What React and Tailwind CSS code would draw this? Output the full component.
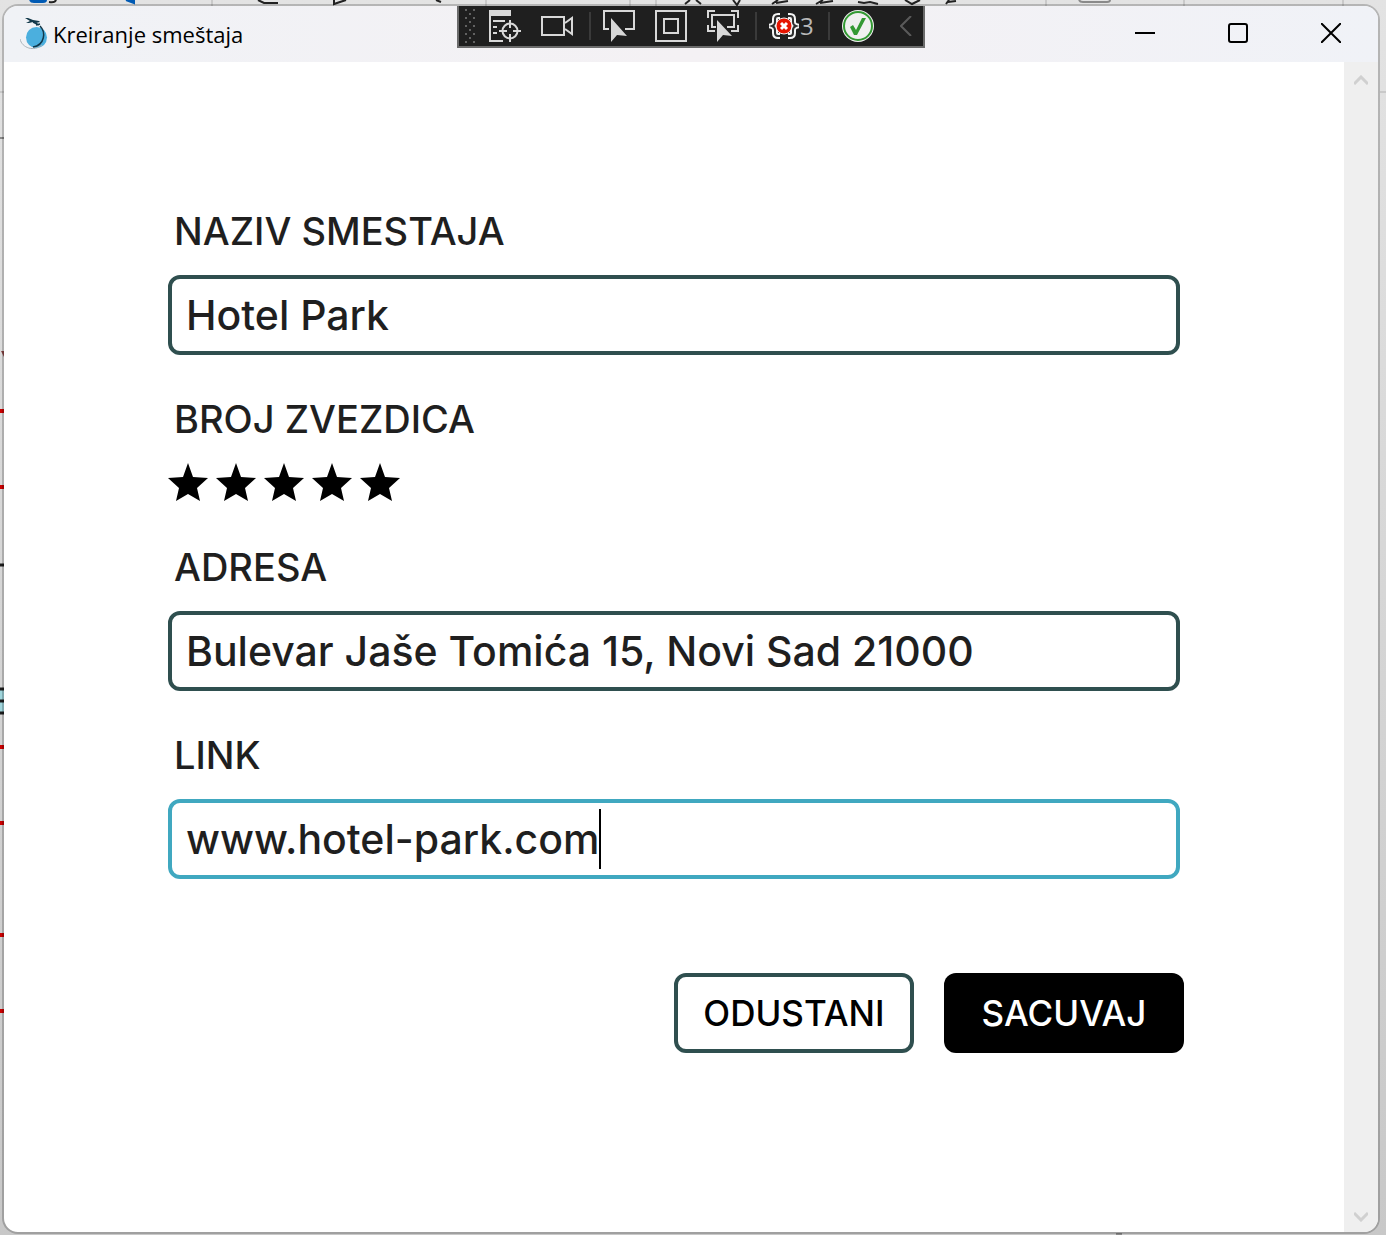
import React from "react";

const strip = "shrink-0 text-[#d8d8d8]";

function Divider() {
  return <span className="h-7 w-0.5 shrink-0 bg-[#3a3a3a]" />;
}

function AppLogo() {
  return (
    <svg className="h-8 w-8 shrink-0" viewBox="0 0 32 32" aria-hidden="true">
      <circle cx="16.500" cy="19.500" r="10.500" fill="#4bafde" />
      <path d="M0 21c2 9 14 13 22 6" fill="none" stroke="#aab2b8" strokeWidth="1" />
      <path d="M20 8c6 6 5 19-7 21" fill="none" stroke="#12384a" strokeWidth="1.500" />
      <path d="M5 0l3 0 5 2 6 1 1 1-4 1-3-1-4 1-3 0 4-2z" fill="#12384a" />
      <path d="M13 4l6 3M16 7l4-1" stroke="#12384a" strokeWidth="1.500" />
    </svg>
  );
}

function DebugToolbar() {
  return (
    <div
      role="toolbar"
      aria-label="Debug"
      className="absolute inset-x-0 -top-0.5 mx-auto flex h-11 w-[468px] items-center border-2 border-[#6b6b6b] bg-[#1f1f1f]"
    >
      <svg className="ml-1.5 h-9 w-3 shrink-0" viewBox="0 0 12 36" fill="#626262" aria-hidden="true">
        {[0, 8, 16, 24, 32].map((y) => (
          <path key={y} d={`M0 ${y + 1}h2v2h-2zM8 ${y + 1}h2v2h-2z`} />
        ))}
        {[5, 13, 21, 29].map((y) => (
          <path key={y} d={`M4 ${y}h2v2h-2z`} />
        ))}
      </svg>
      <button type="button" aria-label="Live visual tree" className={`ml-3 ${strip}`}>
        <svg className="h-8 w-8" viewBox="0 0 32 32" fill="none" stroke="currentColor" strokeWidth="2">
          <path d="M0 0h22v6H0z" fill="currentColor" stroke="none" />
          <path d="M1 5v26h13M4 11h12M4 17h4M4 23h4" />
          <circle cx="21" cy="21" r="7.500" />
          <path d="M21 10v8M21 24v8M10 21h8M24 21h8" />
        </svg>
      </button>
      <button type="button" aria-label="Record" className={`ml-5 ${strip}`}>
        <svg className="h-8 w-8" viewBox="0 0 32 32" fill="none" stroke="currentColor" strokeWidth="2">
          <path d="M1 7h22v18H1zM24 13l7-5v16l-7-5" />
        </svg>
      </button>
      <span className="w-4 shrink-0" />
      <Divider />
      <button type="button" aria-label="Select element" className={`ml-3 ${strip}`}>
        <svg className="h-8 w-8" viewBox="0 0 32 32" fill="none" stroke="currentColor" strokeWidth="2">
          <path d="M6 19H1V1h30v18h-9" />
          <path d="M8 8v24l6-7 10 1z" fill="currentColor" stroke="none" />
        </svg>
      </button>
      <button type="button" aria-label="Display layout adorners" className={`ml-5 ${strip}`}>
        <svg className="h-8 w-8" viewBox="0 0 32 32" fill="none" stroke="currentColor" strokeWidth="2">
          <path d="M1 1h30v30H1zM9 9h14v14H9z" />
        </svg>
      </button>
      <button type="button" aria-label="Track focused element" className={`ml-5 ${strip}`}>
        <svg className="h-8 w-8" viewBox="0 0 32 32" fill="none" stroke="currentColor" strokeWidth="2">
          <path d="M8 1H1v7M24 1h7v7M1 15v6h7M31 15v6h-7M9 17H5V5h22v12h-7" />
          <path d="M10 10v22l6-7 9 1z" fill="currentColor" stroke="none" />
        </svg>
      </button>
      <span className="w-4 shrink-0" />
      <Divider />
      <button
        type="button"
        aria-label="Binding failures: 3"
        className="ml-3 flex shrink-0 items-center font-['Open_Sans',sans-serif] text-2xl leading-8 text-[#b8b8b8]"
      >
        <svg className="h-7 w-[30px]" viewBox="0 0 30 28" fill="none">
          <path
            d="M11 4H9Q6 4 6 7v3q0 3-3 4 3 1 3 4v3q0 3 3 3h2M19 4h2q3 0 3 3v3q0 3 3 4-3 1-3 4v3q0 3-3 3h-2"
            stroke="#f4f4f4"
            strokeWidth="6"
          />
          <path
            d="M11 4H9Q6 4 6 7v3q0 3-3 4 3 1 3 4v3q0 3 3 3h2M19 4h2q3 0 3 3v3q0 3 3 4-3 1-3 4v3q0 3-3 3h-2"
            stroke="#303030"
            strokeWidth="2"
          />
          <circle cx="15" cy="14" r="8" fill="#e51400" stroke="#f4f4f4" strokeWidth="1" />
          <path d="M12 11l6 6M18 11l-6 6" stroke="#fff" strokeWidth="3" />
        </svg>
        <span className="ml-px">3</span>
      </button>
      <span className="w-3.5 shrink-0" />
      <Divider />
      <button type="button" aria-label="Hot reload available" className={`ml-3 ${strip}`}>
        <svg className="h-8 w-8" viewBox="0 0 32 32" fill="none">
          <circle cx="16" cy="16" r="16" fill="#f0f0f0" />
          <circle cx="16" cy="16" r="14" stroke="#339933" strokeWidth="2" />
          <path d="M8 17l3-2 3 5 6-12h4l-9 17h-3z" fill="#339933" />
        </svg>
      </button>
      <button type="button" aria-label="Collapse toolbar" className="ml-6.5 shrink-0 text-[#5a5a5a]">
        <svg className="h-5 w-3" viewBox="0 0 12 20" fill="none" stroke="currentColor" strokeWidth="2">
          <path d="M11 0L1 10l10 10" />
        </svg>
      </button>
    </div>
  );
}

function TitleBar() {
  return (
    <header className="relative flex h-14 shrink-0 items-center justify-between bg-linear-to-r from-[#f0f2f6] via-[#f4f1f4] to-[#f0f2f7] pr-[37px] pl-4">
      <div className="flex items-center gap-px">
        <AppLogo />
        <h1 className="font-['Open_Sans',sans-serif] text-[22px] leading-8 text-black">Kreiranje smeštaja</h1>
      </div>
      <div className="flex items-center gap-[73px] pb-0.5 text-black">
        <button type="button" aria-label="Minimize">
          <svg className="h-5 w-5" viewBox="0 0 20 20" stroke="currentColor" strokeWidth="2">
            <path d="M0 10h20" />
          </svg>
        </button>
        <button type="button" aria-label="Maximize">
          <svg className="h-5 w-5" viewBox="0 0 20 20" fill="none" stroke="currentColor" strokeWidth="2">
            <rect x="1" y="1" width="18" height="18" rx="2" />
          </svg>
        </button>
        <button type="button" aria-label="Close">
          <svg className="h-5 w-5" viewBox="0 0 20 20" stroke="currentColor" strokeWidth="2">
            <path d="M0 0l20 20M20 0L0 20" />
          </svg>
        </button>
      </div>
      <DebugToolbar />
    </header>
  );
}

const labelClass = "block pl-1.5 text-[38px] leading-[60px] font-medium text-[#1f1f1f]";
const inputClass =
  "block h-20 w-full rounded-xl border-4 bg-white px-3.5 text-[41px] font-medium text-[#1f1f1f] outline-none";

function Field({ id, label, value, focused }) {
  return (
    <div className="flex flex-col gap-3.5">
      <label htmlFor={id} className={labelClass}>
        {label}
      </label>
      <div className="relative">
        <input
          id={id}
          type="text"
          defaultValue={value}
          className={`${inputClass} ${focused ? "border-[#40a8c0]" : "border-[#2f4f4f]"}`}
        />
        {focused && (
          <div className="pointer-events-none absolute inset-y-2.5 left-4.5 flex text-[41px] font-medium" aria-hidden="true">
            <span className="invisible">{value}</span>
            <span className="w-0.5 bg-black" />
          </div>
        )}
      </div>
    </div>
  );
}

function Stars() {
  return (
    <div className="flex flex-col gap-3.5">
      <span id="stars-label" className={labelClass}>
        BROJ ZVEZDICA
      </span>
      <div role="group" aria-labelledby="stars-label" className="flex gap-2">
        {[1, 2, 3, 4, 5].map((n) => (
          <button key={n} type="button" aria-label={String(n)}>
            <svg className="h-10 w-10" viewBox="0 0 40 40">
              <path d="M20 0l5 14 15 1-11 10 3 13-12-7-12 7 3-13L0 15l15-1z" fill="#000" />
            </svg>
          </button>
        ))}
      </div>
    </div>
  );
}

function ScrollBar() {
  return (
    <div className="flex w-[34px] shrink-0 flex-col items-center justify-between bg-[#efefef] pt-[13px] pb-2.5 text-[#d0d0d0]">
      <svg className="h-2.5 w-3.5" viewBox="0 0 14 10" fill="none" stroke="currentColor" strokeWidth="3" aria-hidden="true">
        <path d="M0 9l7-7 7 7" />
      </svg>
      <svg className="h-2.5 w-3.5" viewBox="0 0 14 10" fill="none" stroke="currentColor" strokeWidth="3" aria-hidden="true">
        <path d="M0 1l7 7 7-7" />
      </svg>
    </div>
  );
}

function Backdrop() {
  return (
    <div className="pointer-events-none absolute inset-0 overflow-hidden" aria-hidden="true">
      <svg className="absolute top-0 left-0 h-[1235px] w-[1386px]" viewBox="0 0 1386 1235">
        <path d="M212 0v6M486 0v6M630 0v6M656 0v6M1046 0v6M1184 0v6M1343 0v6M0 92h4M1380 92h6" stroke="#c9c9c9" strokeWidth="2" />
        <path d="M30 0q1 2 4 2h9q3 0 3-2M126 0l8 3V0" stroke="#005ab4" strokeWidth="2" fill="#005ab4" />
        <path
          d="M49 2q6 1 7-2M258 0l6 3h14M334 0v4l6-2 6-2M436 0l5 2M685 4l5-4M696 0l5 4M733 0l4 5 3-5M772 4l6-4M776 3l12-2M816 4l7-4M820 3l13-2M858 2l6 1 6-1 8 2M905 0l7 4 8-4M946 4l3-4M948 2l8-1"
          stroke="#222"
          strokeWidth="2"
          fill="none"
        />
        <path d="M1079 0q1 2 4 2h24q3 0 3-2" stroke="#8a8a8a" strokeWidth="2" fill="none" />
        <path d="M0 411h4M0 487h4M0 747h4M0 823h4M0 935h4M0 1011h4" stroke="#cc0000" strokeWidth="4" />
        <path d="M0 688h4v26H0z" fill="#9fd5dc" />
        <path d="M0 565h4M0 689h4M0 701h4M0 713h4" stroke="#1c1c1c" strokeWidth="3" />
        <path d="M0 138h4M1116 1234h6" stroke="#888" strokeWidth="2" />
        <path d="M1 351h3v6z" fill="#8b4545" />
      </svg>
    </div>
  );
}

export default function App() {
  return (
    <div className="relative flex min-h-screen bg-linear-to-b from-[#e3e3e3] to-[#c8c8c8] pt-1 pr-1.5 pb-px pl-0.5 font-[Inter,sans-serif]">
      <Backdrop />
      <div className="relative flex flex-1 flex-col overflow-hidden rounded-2xl border-2 border-black/20 bg-white bg-clip-padding">
        <TitleBar />
        <div className="flex flex-1">
          <main className="min-w-0 flex-1 pt-[139px] pr-40 pb-20 pl-41">
            <form onSubmit={(e) => e.preventDefault()}>
              <div className="flex flex-col gap-[34px] pr-1">
                <Field id="name" label="NAZIV SMESTAJA" value="Hotel Park" />
                <Stars />
                <Field id="address" label="ADRESA" value="Bulevar Jaše Tomića 15, Novi Sad 21000" />
                <Field id="link" label="LINK" value="www.hotel-park.com" focused />
              </div>
              <div className="mt-[94px] flex justify-end gap-[30px] text-[35px] font-medium">
                <button type="button" className="h-20 w-60 rounded-xl border-4 border-[#2f4f4f] bg-white text-black">
                  ODUSTANI
                </button>
                <button type="submit" className="h-20 w-60 rounded-xl bg-black text-white">
                  SACUVAJ
                </button>
              </div>
            </form>
          </main>
          <ScrollBar />
        </div>
      </div>
    </div>
  );
}
